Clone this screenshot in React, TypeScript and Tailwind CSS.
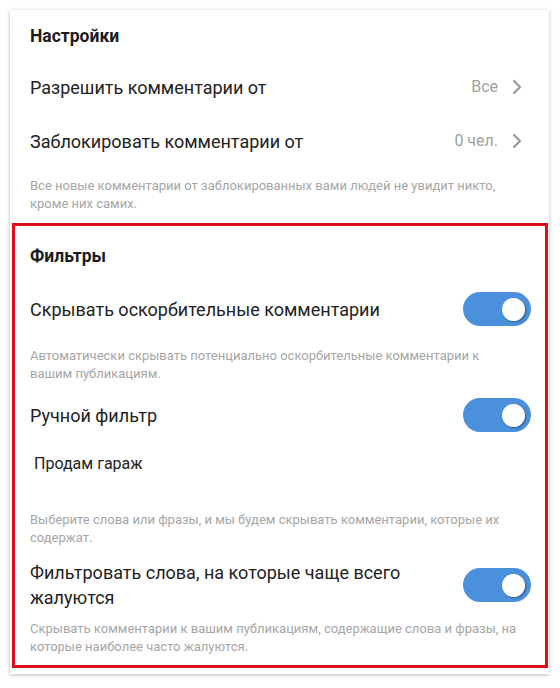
import React, { type FC } from 'react'

const font = { fontFamily: 'Roboto, "Noto Sans", sans-serif' }

const Chevron: FC = () => (
  <svg width="10" height="16" viewBox="0 0 10 16" className="ml-[14px]">
    <path d="M2 2 L8 8 L2 14" fill="none" stroke="#9a9a9a" strokeWidth="2.2" strokeLinecap="round" strokeLinejoin="round" />
  </svg>
)

const Toggle: FC = () => (
  <div className="w-[68px] h-[34px] rounded-full bg-[#4a90dc] flex items-center justify-end pr-[6px] shrink-0">
    <div className="w-[23px] h-[23px] rounded-full bg-white shadow-[1px_1px_2px_rgba(0,0,0,0.35)]" />
  </div>
)

const NavRow: FC<{ label: string; value: string }> = ({ label, value }) => (
  <div className="h-[54px] flex items-center justify-between pl-[20px] pr-[27px]">
    <span className="text-[18px] text-[#222]">{label}</span>
    <span className="flex items-center text-[16px] text-[#a0a0a0]">
      {value}
      <Chevron />
    </span>
  </div>
)

const Note: FC<{ children: React.ReactNode; className?: string }> = ({ children, className }) => (
  <p className={`text-[13px] leading-[18px] text-[#a6a6a6] ${className ?? ''}`}>{children}</p>
)

export default function App() {
  return (
    <div style={font} className="w-[560px] h-[688px] bg-white pt-[10px] pl-[10px]">
      <div className="w-[539px] bg-white shadow-[0_1px_4px_rgba(0,0,0,0.28)] pb-[6px]">
        <div className="h-[50px] flex items-center pl-[20px] pt-[2px]">
          <span className="text-[17.5px] font-bold text-[#1c1c1c]">Настройки</span>
        </div>
        <NavRow label="Разрешить комментарии от" value="Все" />
        <NavRow label="Заблокировать комментарии от" value="0 чел." />
        <Note className="pl-[20px] pr-[40px] pt-[9px] pb-[10px]">
          Все новые комментарии от заблокированных вами людей не увидит никто, кроме них самих.
        </Note>

        <div className="ml-[2px] mr-[1px] border-[3px] border-[#d9101a]">
          <div className="h-[60px] flex items-center pl-[15px]">
            <span className="text-[17.5px] font-bold text-[#1c1c1c]">Фильтры</span>
          </div>
          <div className="h-[46px] flex items-center justify-between pl-[15px] pr-[14px]">
            <span className="text-[18px] text-[#222]">Скрывать оскорбительные комментарии</span>
            <Toggle />
          </div>
          <Note className="pl-[15px] pr-[40px] pt-[15px]">
            Автоматически скрывать потенциально оскорбительные комментарии к вашим публикациям.
          </Note>
          <div className="h-[64px] flex items-center justify-between pl-[15px] pr-[14px]">
            <span className="text-[18px] text-[#222]">Ручной фильтр</span>
            <Toggle />
          </div>
          <div className="h-[34px] flex items-center pl-[19px]">
            <span className="text-[16px] text-[#222]">Продам гараж</span>
          </div>
          <Note className="pl-[15px] pr-[40px] pt-[30px]">
            Выберите слова или фразы, и мы будем скрывать комментарии, которые их содержат.
          </Note>
          <div className="flex items-center justify-between pl-[15px] pr-[14px] pt-[13px]">
            <span className="text-[18px] leading-[25px] text-[#222] w-[390px]">
              Фильтровать слова, на которые чаще всего жалуются
            </span>
            <Toggle />
          </div>
          <Note className="pl-[15px] pr-[14px] pt-[10px] pb-[9px]">
            Скрывать комментарии к вашим публикациям, содержащие слова и фразы, на которые наиболее часто жалуются.
          </Note>
        </div>
      </div>
    </div>
  )
}
